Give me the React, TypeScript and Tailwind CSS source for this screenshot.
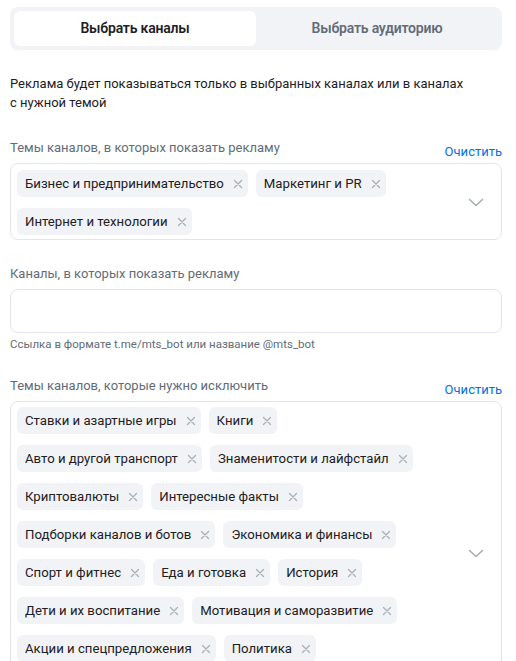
import React from "react";

const Cross = () => (
  <svg width="12" height="12" viewBox="0 0 12 12" className="shrink-0 ml-[8px]">
    <path d="M2.5 2.5L9.5 9.5M9.5 2.5L2.5 9.5" stroke="#a8b0b8" strokeWidth="1.3" strokeLinecap="round" />
  </svg>
);

const Chevron = () => (
  <svg width="16" height="9" viewBox="0 0 16 9">
    <path d="M1.5 1.5L8 7.5L14.5 1.5" stroke="#a0a8b0" strokeWidth="1.4" fill="none" strokeLinecap="round" strokeLinejoin="round" />
  </svg>
);

const Chip = ({ label }: { label: string }) => (
  <div className="flex items-center h-[27px] rounded-[6px] bg-[#f2f3f7] pl-[8px] pr-[4px] text-[13.2px] leading-[20px] text-[#1d2023] whitespace-nowrap">
    <span>{label}</span>
    <Cross />
  </div>
);

const Header = ({ label, clear }: { label: string; clear?: boolean }) => (
  <div className="flex items-end justify-between">
    <span className="text-[13px] leading-[20px] text-[#626c77] mb-[4px]">{label}</span>
    {clear && <span className="text-[13px] leading-[20px] text-[#0070e5]">Очистить</span>}
  </div>
);

const ChipBox = ({ rows, pt, pb }: { rows: string[][]; pt: string; pb: string }) => (
  <div className={`mt-[1px] flex items-center border border-[#e2e5eb] rounded-[8px] pl-[6px] pr-[17px] ${pt} ${pb}`}>
    <div className="flex flex-1 flex-col gap-y-[11px]">
      {rows.map((row, i) => (
        <div key={i} className="flex gap-x-[8px]">
          {row.map((c) => (
            <Chip key={c} label={c} />
          ))}
        </div>
      ))}
    </div>
    <Chevron />
  </div>
);

export default function App() {
  return (
    <div
      className="w-[516px] h-[661px] overflow-hidden bg-white pl-[10px] pr-[14px] pt-[7px]"
      style={{ fontFamily: "Roboto, 'Noto Sans', sans-serif" }}
    >
      <div className="flex rounded-[8px] bg-[#f2f3f7] p-[4px]">
        <div className="flex-1 h-[35px] flex items-center justify-center rounded-[6px] bg-white text-[14px] tracking-[-0.2px] font-semibold text-[#1d2023]">
          Выбрать каналы
        </div>
        <div className="flex-1 h-[35px] flex items-center justify-center text-[14px] tracking-[-0.2px] font-semibold text-[#626c77]">
          Выбрать аудиторию
        </div>
      </div>

      <p className="mt-[24px] text-[13px] leading-[19px] text-[#1d2023]">
        Реклама будет показываться только в выбранных каналах или в каналах
        <br />с нужной темой
      </p>

      <div className="mt-[26px]">
        <Header label="Темы каналов, в которых показать рекламу" clear />
        <ChipBox
          pt="pt-[6px]"
          pb="pb-[4px]"
          rows={[["Бизнес и предпринимательство", "Маркетинг и PR"], ["Интернет и технологии"]]}
        />
      </div>

      <div className="mt-[24px]">
        <span className="block text-[13px] leading-[20px] text-[#626c77]">Каналы, в которых показать рекламу</span>
        <div className="mt-[5px] h-[44px] border border-[#e2e5eb] rounded-[8px]" />
        <span className="block mt-[3px] text-[11.5px] leading-[16px] text-[#626c77]">
          Ссылка в формате t.me/mts_bot или название @mts_bot
        </span>
      </div>

      <div className="mt-[24px]">
        <Header label="Темы каналов, которые нужно исключить" clear />
        <ChipBox
          pt="pt-[5px]"
          pb="pb-[5px]"
          rows={[
            ["Ставки и азартные игры", "Книги"],
            ["Авто и другой транспорт", "Знаменитости и лайфстайл"],
            ["Криптовалюты", "Интересные факты"],
            ["Подборки каналов и ботов", "Экономика и финансы"],
            ["Спорт и фитнес", "Еда и готовка", "История"],
            ["Дети и их воспитание", "Мотивация и саморазвитие"],
            ["Акции и спецпредложения", "Политика"],
            ["Юмор и развлечения"],
          ]}
        />
      </div>
    </div>
  );
}
